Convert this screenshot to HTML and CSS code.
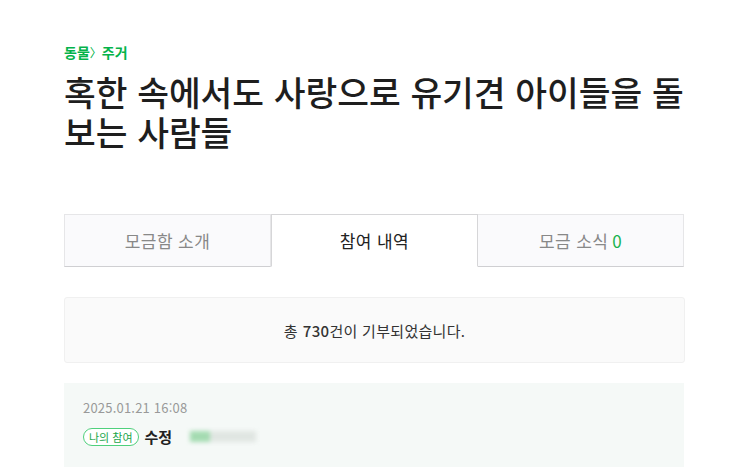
FILE: index.html
```html
<!DOCTYPE html>
<html lang="ko">
<head>
    <meta charset="UTF-8">
    <meta name="viewport" content="width=device-width, initial-scale=1.0">
    <title>참여 내역</title>
    <link rel="stylesheet" href="styles.css">
</head>
<body>
    <div class="page">
        <div class="category">동물<span class="sep">〉</span>주거</div>
        <h1 class="title">혹한 속에서도 사랑으로 유기견 아이들을 돌보는 사람들</h1>

        <div class="tabs">
            <a class="tab">모금함 소개</a>
            <a class="tab active">참여 내역</a>
            <a class="tab">모금 소식 <span class="count">0</span></a>
        </div>

        <div class="summary">총 <strong>730</strong>건이 기부되었습니다.</div>

        <ul class="history">
            <li class="item">
                <div class="date">2025.01.21 16:08</div>
                <div class="who">
                    <span class="badge">나의 참여</span>
                    <span class="name">수정</span>
                    <span class="blur"><i class="g"></i><i></i></span>
                </div>
            </li>
        </ul>
    </div>
</body>
</html>
```

FILE: styles.css
```css
body {
    margin: 0;
    font-family: "Noto Sans CJK KR", "Noto Sans", sans-serif;
    color: #222;
    background: #fff;
}
.page {
    padding: 42px 40px 0 64px;
}
.category {
    font-size: 14px;
    font-weight: bold;
    color: #03b34a;
    line-height: 20px;
}
.category .sep {
    font-size: 12px;
    font-weight: normal;
}
.title {
    margin: 8px 0 0;
    font-size: 34.5px;
    font-weight: 500;
    line-height: 40px;
    color: #1e1e1e;
    max-width: 640px;
}
.tabs {
    display: flex;
    margin-top: 63px;
    width: 620px;
}
.tab {
    flex: 1;
    height: 51px;
    display: flex;
    align-items: center;
    justify-content: center;
    font-size: 17px;
    letter-spacing: 0.4px;
    color: #888;
    background: #fafafc;
    border: 1px solid #e6e6e8;
    border-bottom-color: #cfcfd2;
}
.tab + .tab {
    border-left: none;
}
.tab.active {
    background: #fff;
    color: #222;
    border-color: #d6d6d8;
    border-bottom-color: transparent;
    border-left: 1px solid #d6d6d8;
}
.tab.active + .tab {
    border-left: none;
}
.tab .count {
    color: #19b34f;
    margin-left: 4px;
}
.summary {
    margin-top: 30px;
    width: 621px;
    height: 66px;
    box-sizing: border-box;
    display: flex;
    align-items: center;
    justify-content: center;
    background: #fafafa;
    border: 1px solid #f0f0f0;
    border-radius: 3px;
    font-size: 15px;
    letter-spacing: 0.3px;
    color: #333;
}
.summary strong {
    font-weight: 500;
    margin-left: 5px;
}
.history {
    list-style: none;
    margin: 20px 0 0;
    padding: 0;
    width: 620px;
}
.item {
    background: #f5f9f7;
    border-bottom: 1px solid #eceeed;
    padding: 16px 19px 20px;
}
.date {
    font-size: 13px;
    letter-spacing: 0.2px;
    color: #999;
    line-height: 18px;
}
.who {
    display: flex;
    align-items: center;
    margin-top: 9px;
}
.badge {
    font-size: 11px;
    color: #1aa64b;
    border: 1px solid #4fd07c;
    border-radius: 10px;
    padding: 0 5px;
    line-height: 16px;
    background: #fff;
}
.name {
    font-size: 15px;
    font-weight: bold;
    margin-left: 6px;
}
.blur {
    display: flex;
    margin-left: 18px;
    filter: blur(2px);
}
.blur i {
    width: 46px;
    height: 11px;
    background: #e0e6e2;
}
.blur .g {
    width: 20px;
    background: #a4dbb1;
}
```
